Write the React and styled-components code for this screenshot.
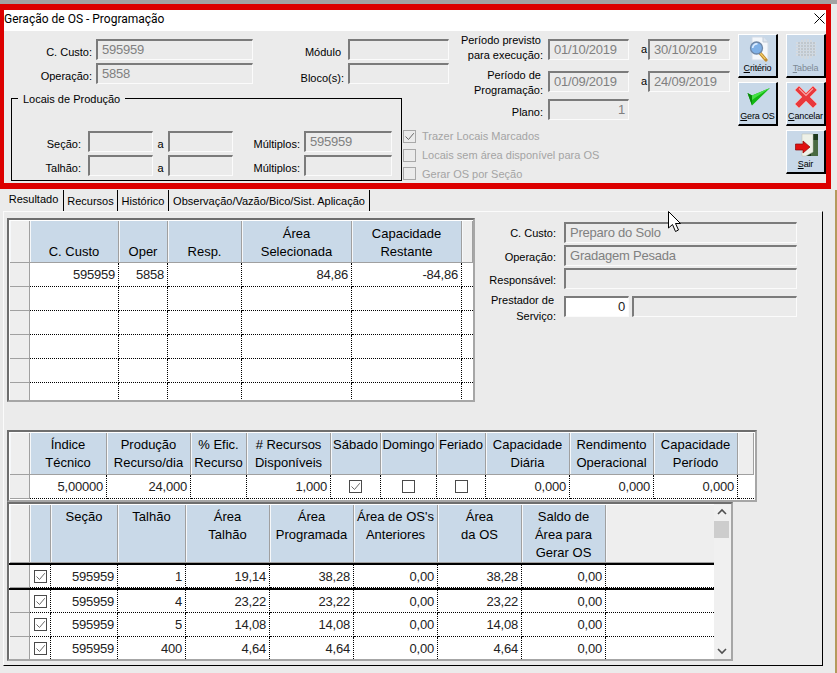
import React from 'react';
import styled, { createGlobalStyle } from 'styled-components';

const GlobalStyle = createGlobalStyle`
    html, body {
        margin: 0;
        padding: 0;
        background: #ebebeb;
    }
    * {
        box-sizing: border-box;
    }
`

const Page = styled.div`
    background: #ebebeb;
    color: #000;
    display: flex;
    flex-direction: column;
    font-family: "Liberation Sans", Arial, sans-serif;
    font-size: 11px;
    height: 673px;
    overflow: hidden;
    position: relative;
    width: 837px;
`

const TopStrip = styled.div`
    background: #a3a3a3;
    flex: none;
    height: 4px;
`

const Panel = styled.section`
    border-color: #dc0000;
    border-style: solid;
    border-width: 6px 5px 6px 4px;
    flex: none;
    height: 185px;
    width: 831px;
`

const TitleBar = styled.div`
    align-items: center;
    background: #fff;
    display: flex;
    height: 21px;
    justify-content: space-between;
    padding: 0 1px 4px 0;
`

const Title = styled.span`
    font-family: Roboto, "Liberation Sans", sans-serif;
    font-size: 12px;
`

const PanelBody = styled.div`
    display: flex;
`

const FormGrid = styled.div`
    display: grid;
    grid-template-columns: 399px 46px 281px;
    grid-template-rows: 67px 24px 61px;
    width: 731px;
`

const TopFields = styled.div`
    display: grid;
    grid-column: 1 / 3;
    grid-row: 1;
    grid-template-columns: 88px 157px 87px 101px;
    grid-auto-rows: 21px;
    column-gap: 4px;
    row-gap: 3px;
    padding-top: 8px;
`

const Label = styled.label`
    display: block;
    line-height: 14px;
    padding-right: ${(p) => p.$pad || 0}px;
    padding-top: ${(p) => (p.$top === undefined ? 6 : p.$top)}px;
    text-align: right;
    white-space: nowrap;
`

const Input = styled.div`
    background: ${(p) => (p.$white ? '#fff' : '#ebebeb')};
    border-bottom: 1px solid #fbfbfb;
    border-left: 2px solid #7b7b7b;
    border-right: 1px solid #fbfbfb;
    border-top: 2px solid #7b7b7b;
    color: ${(p) => (p.$white ? '#222' : '#808080')};
    font-size: 13px;
    height: 21px;
    letter-spacing: -0.22px;
    line-height: 16px;
    overflow: hidden;
    padding: 1px 3px 0 4px;
    text-align: ${(p) => (p.$right ? 'right' : 'left')};
    width: ${(p) => (p.$w ? `${p.$w}px` : 'auto')};
    margin-top: ${(p) => p.$top || 0}px;
    flex: none;
`

const Group = styled.div`
    border: 1px solid #000;
    grid-column: 1;
    grid-row: 2 / 4;
    height: 83px;
    margin-left: 7px;
    padding-top: 32px;
    position: relative;
    width: 391px;
`

const GroupLegend = styled.span`
    background: #ebebeb;
    left: 6px;
    line-height: 14px;
    padding: 0 5px;
    position: absolute;
    top: -7px;
`

const GroupFields = styled.div`
    display: grid;
    grid-auto-rows: 21px;
    grid-template-columns: 76px 65px 15px 65px 71px 88px;
    row-gap: 3px;
`

const ToLabel = styled.span`
    line-height: 14px;
    padding-top: 6px;
    text-align: center;
`

const PeriodColumn = styled.div`
    display: flex;
    flex-direction: column;
    grid-column: 3;
    grid-row: 1 / 3;
    padding-top: 2px;
`

const PeriodRow = styled.div`
    display: flex;
    height: ${(p) => p.$h}px;
`

const PeriodLabel = styled.div`
    flex: none;
    line-height: 15px;
    margin-right: 5px;
    margin-top: ${(p) => p.$top || 0}px;
    text-align: right;
    width: 94px;
    white-space: nowrap;
`

const ShortLine = styled.span`
    display: block;
    padding-right: 2px;
`

const PeriodTo = styled.span`
    flex: none;
    line-height: 14px;
    margin-top: ${(p) => p.$top}px;
    padding-right: 1px;
    text-align: right;
    width: 19px;
`

const Checks = styled.div`
    display: flex;
    flex-direction: column;
    grid-column: 2 / 4;
    grid-row: 3;
    padding-top: 5px;
`

const CheckRow = styled.div`
    align-items: center;
    color: #a4a4a4;
    display: flex;
    gap: 6px;
    height: 20px;
`

const Box = styled.span`
    align-items: center;
    background: ${(p) => (p.$faded ? '#ebebeb' : '#fff')};
    border: 1px solid ${(p) => (p.$faded ? '#a8a8a8' : '#4a4a4a')};
    display: inline-flex;
    flex: none;
    height: 13px;
    justify-content: center;
    width: 13px;
`

const ButtonGrid = styled.div`
    display: grid;
    grid-auto-rows: 44px;
    grid-template-columns: 40px 40px;
    column-gap: 8px;
    margin-left: 4px;
    padding-top: 3px;
    row-gap: 4px;
`

const ToolButton = styled.button`
    align-items: center;
    background: #c8d8e8;
    border-bottom: 2px solid #000;
    border-left: 1px solid #fff;
    border-right: 2px solid #000;
    border-top: 1px solid #fff;
    color: ${(p) => (p.$off ? '#7d8a96' : '#000')};
    display: flex;
    flex-direction: column;
    font-family: "Liberation Sans", Arial, sans-serif;
    font-size: 9px;
    grid-column: ${(p) => p.$col || 'auto'};
    height: 44px;
    justify-content: flex-start;
    letter-spacing: -0.15px;
    line-height: 11px;
    padding: 1px 0 0;
    white-space: nowrap;
    width: 40px;
`

const ToolIcon = styled.svg`
    display: block;
    flex: none;
    height: 26px;
    margin-bottom: 1px;
    width: 26px;
`

const Hotkey = styled.span`
    text-decoration: underline;
`

const TabRow = styled.div`
    display: flex;
    flex: none;
    height: 22px;
    padding-left: 4px;
`

const Tab = styled.div`
    border-right: 1px solid #000;
    flex: none;
    line-height: 14px;
    margin-top: 1px;
    padding-top: ${(p) => (p.$active ? 2 : 4)}px;
    text-align: center;
    white-space: nowrap;
    width: ${(p) => p.$w}px;
    height: 21px;
`

const Sheet = styled.div`
    border-bottom: 1px solid #000;
    border-left: 1px solid #fbfbfb;
    border-right: 1px solid #000;
    border-top: 1px solid #fbfbfb;
    flex: none;
    height: 455px;
    margin-left: 3px;
    padding: 6px 0 0 3px;
    width: 820px;
`

const TopRow = styled.div`
    display: flex;
    height: 212px;
`

const Frame = styled.div`
    background: #fff;
    border-bottom: 2px solid #a6a6a6;
    border-left: 2px solid #6e6e6e;
    border-right: 2px solid #a6a6a6;
    border-top: 2px solid #6e6e6e;
    flex: none;
    height: ${(p) => p.$h}px;
    overflow: hidden;
    position: relative;
    padding: 1px 0 0 1px;
    width: ${(p) => p.$w}px;
`

const GridRow = styled.div`
    display: flex;
`

const HeadCell = styled.div`
    background: ${(p) => (p.$plain ? '#eeeeee' : '#c9d9e8')};
    border-bottom: 1px solid #a0a0a0;
    border-right: 1px solid #a0a0a0;
    display: flex;
    flex: none;
    flex-direction: column;
    height: ${(p) => p.$h}px;
    justify-content: ${(p) => (p.$bottom ? 'flex-end' : 'flex-start')};
    font-size: 13px;
    line-height: 18px;
    padding: ${(p) => (p.$bottom ? '0 0 1px' : '3px 0 0')};
    text-align: center;
    white-space: nowrap;
    overflow: hidden;
    box-shadow: inset 1px 0 0 #f6f8fa;
`

const Cell = styled.div`
    align-items: center;
    border-bottom: 1px dotted #000;
    border-right: 1px dotted #000;
    color: #222;
    display: flex;
    flex: none;
    font-size: 13px;
    height: ${(p) => p.$h}px;
    justify-content: ${(p) => (p.$center ? 'center' : 'flex-end')};
    letter-spacing: -0.22px;
    padding-right: ${(p) => (p.$center ? 0 : 3)}px;
    white-space: nowrap;
`

const FixedCell = styled.div`
    background: #eeeeee;
    border-bottom: 1px solid #a0a0a0;
    border-right: 1px solid #a0a0a0;
    flex: none;
    height: ${(p) => p.$h}px;
    width: 20px;
`

const EndCell = styled.div`
    border-bottom: 1px dotted #000;
    flex: none;
    height: ${(p) => p.$h}px;
    width: ${(p) => p.$w}px;
`

const InfoForm = styled.div`
    display: grid;
    grid-template-columns: 81px 233px;
    grid-template-rows: 21px 21px 21px 21px;
    column-gap: 8px;
    row-gap: 2px;
    margin-top: 4px;
    align-content: start;
`

const PrestadorLabel = styled.div`
    line-height: 16px;
    margin-top: 1px;
    text-align: right;
    white-space: nowrap;
`

const PrestadorInputs = styled.div`
    display: flex;
    gap: 3px;
    margin-top: 5px;
`

const HeavyRule = styled.div`
    background: #000;
    height: 2px;
    margin-left: -1px;
    width: ${(p) => p.$w}px;
`

const ScrollTrack = styled.div`
    background: #f0f0f0;
    bottom: 0;
    display: flex;
    flex-direction: column;
    position: absolute;
    right: 0;
    top: 0;
    width: 17px;
`

const ScrollArrow = styled.svg`
    display: block;
    flex: none;
    height: 17px;
    width: 16px;
`

const ScrollThumb = styled.div`
    background: #cdcdcd;
    flex: none;
    height: 17px;
    width: 15px;
`

const ScrollGap = styled.div`
    flex: 1;
`

const EdgeStrip = styled.div`
    background: #b49a5c;
    bottom: 0;
    position: absolute;
    right: 0;
    top: 190px;
    width: 2px;
`

const Cursor = styled.svg`
    height: 22px;
    left: 668px;
    pointer-events: none;
    position: absolute;
    top: 211px;
    width: 15px;
`

const CheckMark = () => (
    <svg width="11" height="11" viewBox="0 0 11 11">
        <path d="M1.5 5.5 L4.5 8.5 L9.8 2.2" fill="none" stroke="#6a6a6a" strokeWidth="1" />
    </svg>
)

const CriterioIcon = () => (
    <ToolIcon viewBox="0 0 26 26">
        <path d="M7 1 H18 L23 6 V24 H7 Z" fill="#f4f7fb" stroke="#d3dbe6" />
        <path d="M18 1 V6 H23" fill="#dde5ef" stroke="#c2ccd9" />
        <path d="M15 17 L21 24" stroke="#c08a2c" strokeWidth="3.2" strokeLinecap="round" />
        <path d="M15.5 17.5 L20 22.6" stroke="#f2cf6a" strokeWidth="1.2" strokeLinecap="round" />
        <circle cx="11.5" cy="12" r="6" fill="#7fb0e6" stroke="#6f87a6" strokeWidth="1.3" />
        <path d="M7.7 12 A4 4 0 0 1 12.5 8" fill="none" stroke="#dcecff" strokeWidth="1.6" />
    </ToolIcon>
)

const TabelaIcon = () => (
    <ToolIcon viewBox="0 0 26 26">
        <path
            d="M6 6 V20 M9 4 V22 M12 3 V23 M15 3 V23 M18 4 V22 M21 6 V20 M3 7 H23 M3 10 H23 M3 13 H23 M3 16 H23 M3 19 H23"
            stroke="#f4f6f9"
            strokeWidth="1.8"
            fill="none"
        />
        <path
            d="M6 6 V20 M9 4 V22 M12 3 V23 M15 3 V23 M18 4 V22 M21 6 V20 M3 7 H23 M3 10 H23 M3 13 H23 M3 16 H23 M3 19 H23"
            stroke="#8f9aa5"
            strokeWidth="0.6"
            fill="none"
        />
    </ToolIcon>
)

const GeraIcon = () => (
    <ToolIcon viewBox="0 0 26 26">
        <path d="M2.5 9 L7 11.5 L25 4 L7 21.5 Z" fill="#12b812" />
        <path d="M2.5 9 L7 11.5 L7 21.5 Z" fill="#0a8a0a" />
        <path d="M7 11.5 L25 4 L12 12.5 L7 16 Z" fill="#46e046" />
    </ToolIcon>
)

const CancelarIcon = () => (
    <ToolIcon viewBox="0 0 26 26">
        <path
            d="M6 2 L13 9 L20 2 L24 6 L17 13 L24 20 L20 24 L13 17 L6 24 L2 20 L9 13 L2 6 Z"
            fill="#e8383c"
            stroke="#f4a0a0"
            strokeLinejoin="round"
        />
        <path d="M6 4.5 L13 11.5 L20 4.5" fill="none" stroke="#f8a4a4" strokeWidth="1.2" />
    </ToolIcon>
)

const SairIcon = () => (
    <ToolIcon viewBox="0 0 26 26">
        <rect x="12" y="2" width="13" height="22" fill="#1f3a1f" />
        <path d="M18 8 H25 V24 H18 Z" fill="#4a6b42" />
        <path d="M9 2 H20 V20 L13 24 H9 Z" fill="#eef1e8" stroke="#b8bfae" strokeWidth="0.5" />
        <path d="M2.5 12 H10 V9 L17 15 L10 21 V18 H2.5 Z" fill="#e01010" stroke="#8a0808" strokeWidth="0.7" />
    </ToolIcon>
)

const resultCols = [89, 49, 74, 110, 110];
const resultHead = [['C. Custo'], ['Oper'], ['Resp.'], ['Área', 'Selecionada'], ['Capacidade', 'Restante']];
const resultRows = [
    ['595959', '5858', '', '84,86', '-84,86'],
    ['', '', '', '', ''],
    ['', '', '', '', ''],
    ['', '', '', '', ''],
    ['', '', '', '', ''],
    ['', '', '', '', ''],
];

const resourceCols = [77, 84, 56, 84, 50, 56, 49, 84, 84, 84];
const resourceHead = [
    ['Índice', 'Técnico'],
    ['Produção', 'Recurso/dia'],
    ['% Efic.', 'Recurso'],
    ['# Recursos', 'Disponíveis'],
    ['Sábado'],
    ['Domingo'],
    ['Feriado'],
    ['Capacidade', 'Diária'],
    ['Rendimento', 'Operacional'],
    ['Capacidade', 'Período'],
];

const localCols = [21, 67, 68, 84, 84, 84, 84, 84];
const localHead = [
    [],
    ['Seção'],
    ['Talhão'],
    ['Área', 'Talhão'],
    ['Área', 'Programada'],
    ["Área de OS's", 'Anteriores'],
    ['Área', 'da OS'],
    ['Saldo de', 'Área para', 'Gerar OS'],
];
const localRows = [
    { h: 23, v: ['595959', '1', '19,14', '38,28', '0,00', '38,28', '0,00'] },
    { h: 23, v: ['595959', '4', '23,22', '23,22', '0,00', '23,22', '0,00'] },
    { h: 24, v: ['595959', '5', '14,08', '14,08', '0,00', '14,08', '0,00'] },
    { h: 24, v: ['595959', '400', '4,64', '4,64', '0,00', '4,64', '0,00'] },
];

const Header = ({ cols, head, height, bottom, rest }) => (
    <GridRow>
        <HeadCell $plain $h={height} style={{ width: 20 }} />
        {cols.map((w, i) => (
            <HeadCell key={i} $h={height} $bottom={bottom} style={{ width: w }}>
                {head[i].map((line) => (
                    <span key={line}>{line}</span>
                ))}
            </HeadCell>
        ))}
        <HeadCell $plain $h={height} style={{ width: rest }} />
    </GridRow>
)

const App = () => (
    <Page>
        <GlobalStyle />
        <TopStrip />
        <Panel>
            <TitleBar>
                <Title>Geração de OS - Programação</Title>
                <svg width="11" height="11" viewBox="0 0 11 11">
                    <path d="M0.5 0.5 L10.5 10.5 M10.5 0.5 L0.5 10.5" stroke="#000" strokeWidth="1" fill="none" />
                </svg>
            </TitleBar>
            <PanelBody>
                <FormGrid>
                    <TopFields>
                        <Label>C. Custo:</Label>
                        <Input>595959</Input>
                        <Label $pad={3}>Módulo</Label>
                        <Input />
                        <Label>Operação:</Label>
                        <Input>5858</Input>
                        <Label $top={8}>Bloco(s):</Label>
                        <Input />
                    </TopFields>
                    <Group>
                        <GroupLegend>Locais de Produção</GroupLegend>
                        <GroupFields>
                            <Label $pad={7}>Seção:</Label>
                            <Input />
                            <ToLabel>a</ToLabel>
                            <Input />
                            <Label $pad={4}>Múltiplos:</Label>
                            <Input>595959</Input>
                            <Label $pad={7}>Talhão:</Label>
                            <Input />
                            <ToLabel>a</ToLabel>
                            <Input />
                            <Label $pad={4}>Múltiplos:</Label>
                            <Input />
                        </GroupFields>
                    </Group>
                    <PeriodColumn>
                        <PeriodRow $h={35}>
                            <PeriodLabel>
                                <ShortLine>Período previsto</ShortLine>
                                para execução:
                            </PeriodLabel>
                            <Input $w={81} $top={6}>01/10/2019</Input>
                            <PeriodTo $top={9}>a</PeriodTo>
                            <Input $w={82} $top={6}>30/10/2019</Input>
                        </PeriodRow>
                        <PeriodRow $h={29}>
                            <PeriodLabel>
                                <ShortLine>Período de</ShortLine>
                                Programação:
                            </PeriodLabel>
                            <Input $w={81} $top={3}>01/09/2019</Input>
                            <PeriodTo $top={6}>a</PeriodTo>
                            <Input $w={82} $top={3}>24/09/2019</Input>
                        </PeriodRow>
                        <PeriodRow $h={24}>
                            <PeriodLabel $top={8}>Plano:</PeriodLabel>
                            <Input $w={81} $top={2} $right>1</Input>
                        </PeriodRow>
                    </PeriodColumn>
                    <Checks>
                        <CheckRow>
                            <Box $faded><CheckMark /></Box>
                            Trazer Locais Marcados
                        </CheckRow>
                        <CheckRow>
                            <Box $faded />
                            Locais sem área disponível para OS
                        </CheckRow>
                        <CheckRow>
                            <Box $faded />
                            Gerar OS por Seção
                        </CheckRow>
                    </Checks>
                </FormGrid>
                <ButtonGrid>
                    <ToolButton>
                        <CriterioIcon />
                        <span><Hotkey>C</Hotkey>ritério</span>
                    </ToolButton>
                    <ToolButton $off>
                        <TabelaIcon />
                        <span><Hotkey>T</Hotkey>abela</span>
                    </ToolButton>
                    <ToolButton>
                        <GeraIcon />
                        <span><Hotkey>G</Hotkey>era OS</span>
                    </ToolButton>
                    <ToolButton>
                        <CancelarIcon />
                        <span><Hotkey>C</Hotkey>ancelar</span>
                    </ToolButton>
                    <ToolButton $col={2}>
                        <SairIcon />
                        <span><Hotkey>S</Hotkey>air</span>
                    </ToolButton>
                </ButtonGrid>
            </PanelBody>
        </Panel>
        <TabRow>
            <Tab $active $w={60}>Resultado</Tab>
            <Tab $w={54}>Recursos</Tab>
            <Tab $w={51}>Histórico</Tab>
            <Tab $w={201}>Observação/Vazão/Bico/Sist. Aplicação</Tab>
        </TabRow>
        <Sheet>
            <TopRow>
                <Frame $w={468} $h={184}>
                    <Header cols={resultCols} head={resultHead} height={42} rest={11} bottom />
                    {resultRows.map((row, r) => (
                        <GridRow key={r}>
                            <FixedCell $h={24} />
                            {resultCols.map((w, i) => (
                                <Cell key={i} $h={24} style={{ width: w }}>{row[i]}</Cell>
                            ))}
                            <EndCell $h={24} $w={11} />
                        </GridRow>
                    ))}
                </Frame>
                <InfoForm>
                    <Label $top={4}>C. Custo:</Label>
                    <Input>Preparo do Solo</Input>
                    <Label $top={5}>Operação:</Label>
                    <Input>Gradagem Pesada</Input>
                    <Label $top={5}>Responsável:</Label>
                    <Input />
                    <PrestadorLabel>
                        <ShortLine>Prestador de</ShortLine>
                        Serviço:
                    </PrestadorLabel>
                    <PrestadorInputs>
                        <Input $white $right $w={65}>0</Input>
                        <Input $w={165} />
                    </PrestadorInputs>
                </InfoForm>
            </TopRow>
            <Frame $w={750} $h={72}>
                <Header cols={resourceCols} head={resourceHead} height={42} rest={16} />
                <GridRow>
                    <FixedCell $h={24} />
                    {['5,00000', '24,000', '', '1,000'].map((v, i) => (
                        <Cell key={i} $h={24} style={{ width: resourceCols[i] }}>{v}</Cell>
                    ))}
                    <Cell $center $h={24} style={{ width: 50 }}><Box><CheckMark /></Box></Cell>
                    <Cell $center $h={24} style={{ width: 56 }}><Box /></Cell>
                    <Cell $center $h={24} style={{ width: 49 }}><Box /></Cell>
                    {['0,000', '0,000', '0,000'].map((v, i) => (
                        <Cell key={i} $h={24} style={{ width: 84 }}>{v}</Cell>
                    ))}
                    <EndCell $h={24} $w={16} />
                </GridRow>
            </Frame>
            <Frame $w={726} $h={159}>
                <Header cols={localCols} head={localHead} height={58} rest={110} />
                <HeavyRule $w={705} />
                {localRows.map((row, r) => (
                    <React.Fragment key={r}>
                        <GridRow>
                            <FixedCell $h={row.h} />
                            <Cell $center $h={row.h} style={{ width: 21 }}><Box><CheckMark /></Box></Cell>
                            {row.v.map((v, i) => (
                                <Cell key={i} $h={row.h} style={{ width: localCols[i + 1] }}>{v}</Cell>
                            ))}
                            <EndCell $h={row.h} $w={110} />
                        </GridRow>
                        {r === 0 && <HeavyRule $w={705} />}
                    </React.Fragment>
                ))}
                <ScrollTrack>
                    <ScrollArrow viewBox="0 0 16 17">
                        <path d="M4 10 L8 6 L12 10" fill="none" stroke="#505050" strokeWidth="1.6" />
                    </ScrollArrow>
                    <ScrollThumb />
                    <ScrollGap />
                    <ScrollArrow viewBox="0 0 16 17">
                        <path d="M4 7 L8 11 L12 7" fill="none" stroke="#505050" strokeWidth="1.6" />
                    </ScrollArrow>
                </ScrollTrack>
            </Frame>
        </Sheet>
        <EdgeStrip />
        <Cursor viewBox="0 0 15 22">
            <path d="M0.5 0.5 V17 L4.5 13.5 L7.5 20.5 L10.5 19 L7.5 12.5 L12.5 12.5 Z" fill="#fff" stroke="#000" strokeWidth="1" />
        </Cursor>
    </Page>
);

export default App;
